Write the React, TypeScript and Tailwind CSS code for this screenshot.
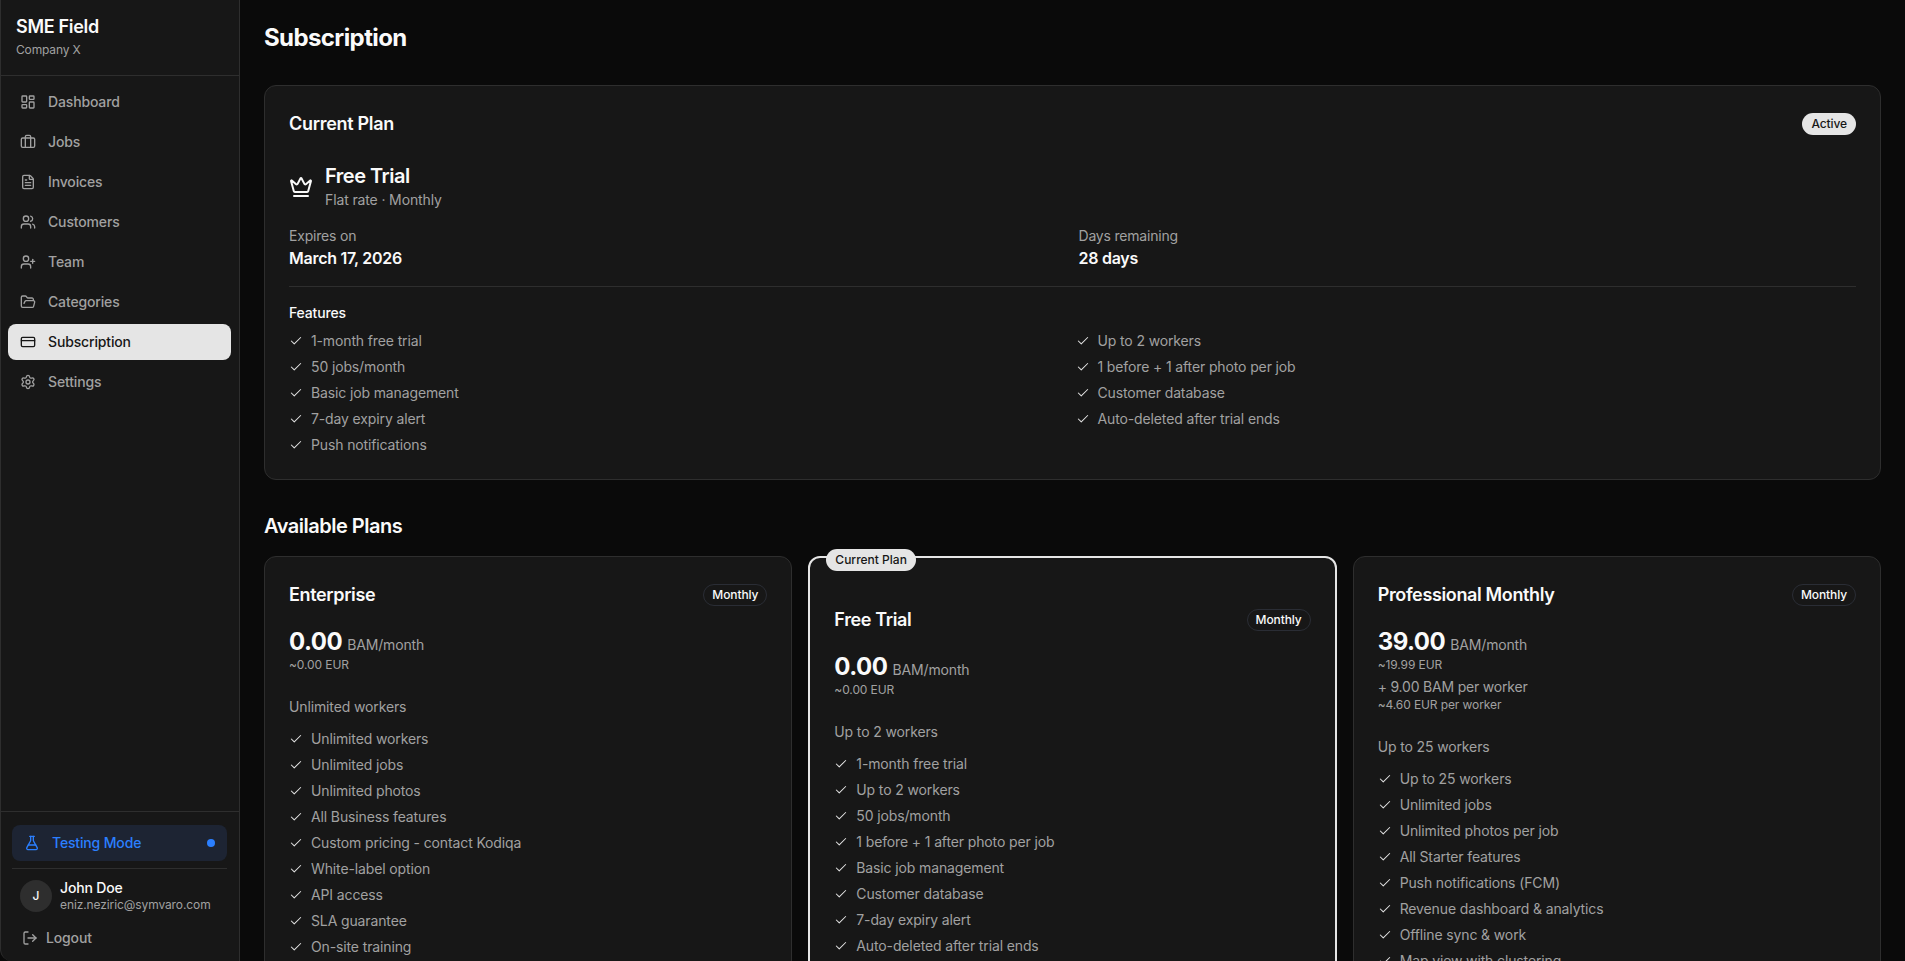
import { Briefcase, Check, CreditCard, Crown, FileText, FlaskConical, FolderOpen, LayoutDashboard, LogOut, Settings, UserPlus, Users } from "lucide-react";

const nav = [
  { label: "Dashboard", Icon: LayoutDashboard },
  { label: "Jobs", Icon: Briefcase },
  { label: "Invoices", Icon: FileText },
  { label: "Customers", Icon: Users },
  { label: "Team", Icon: UserPlus },
  { label: "Categories", Icon: FolderOpen },
  { label: "Subscription", Icon: CreditCard, active: true },
  { label: "Settings", Icon: Settings },
];

const leftFeatures = ["1-month free trial", "50 jobs/month", "Basic job management", "7-day expiry alert", "Push notifications"];
const rightFeatures = ["Up to 2 workers", "1 before + 1 after photo per job", "Customer database", "Auto-deleted after trial ends"];

const plans = [
  {
    name: "Enterprise",
    price: "0.00",
    eur: "~0.00 EUR",
    workers: "Unlimited workers",
    features: ["Unlimited workers", "Unlimited jobs", "Unlimited photos", "All Business features", "Custom pricing - contact Kodiqa", "White-label option", "API access", "SLA guarantee", "On-site training"],
  },
  {
    name: "Free Trial",
    current: true,
    price: "0.00",
    eur: "~0.00 EUR",
    workers: "Up to 2 workers",
    features: ["1-month free trial", "Up to 2 workers", "50 jobs/month", "1 before + 1 after photo per job", "Basic job management", "Customer database", "7-day expiry alert", "Auto-deleted after trial ends"],
  },
  {
    name: "Professional Monthly",
    price: "39.00",
    eur: "~19.99 EUR",
    extra: "+ 9.00 BAM per worker",
    extraEur: "~4.60 EUR per worker",
    workers: "Up to 25 workers",
    features: ["Up to 25 workers", "Unlimited jobs", "Unlimited photos per job", "All Starter features", "Push notifications (FCM)", "Revenue dashboard & analytics", "Offline sync & work", "Map view with clustering"],
  },
];

function Feature({ text }: { text: string }) {
  return (
    <li className="flex items-center gap-2 text-sm leading-5 text-[#a1a1a1]">
      <Check size={14} strokeWidth={1.75} className="shrink-0 text-[#e5e5e5]" />
      <span>{text}</span>
    </li>
  );
}

function Sidebar() {
  return (
    <aside className="flex h-full w-[240px] shrink-0 flex-col rounded-bl-xl border-x border-[#2e2e2e] bg-[#171717]">
      <div className="h-[76px] shrink-0 border-b border-[#2e2e2e] px-[15px] pt-[13px]">
        <div className="text-lg leading-7 font-semibold tracking-[-0.3px] text-[#fafafa]">SME Field</div>
        <div className="mt-px text-xs leading-4 tracking-[-0.15px] text-[#a1a1a1]">Company X</div>
      </div>
      <nav className="flex flex-1 flex-col gap-1 pt-2 pr-2 pl-[7px]">
        {nav.map(({ label, Icon, active }) => (
          <div
            key={label}
            className={`flex h-9 items-center gap-3 rounded-lg px-3 text-sm font-medium tracking-[-0.15px] ${active ? "bg-[#e5e5e5] text-[#171717]" : "text-[#a1a1a1]"}`}
          >
            <Icon size={16} strokeWidth={2} className="shrink-0" />
            <span>{label}</span>
          </div>
        ))}
      </nav>
      <div className="border-t border-[#2e2e2e] pt-[13px] pr-3 pb-[5px] pl-[11px]">
        <div className="flex h-9 items-center gap-3 rounded-lg bg-[#1d2433] px-3 text-sm font-medium tracking-[-0.15px] text-[#2b7fff]">
          <FlaskConical size={16} strokeWidth={2} className="shrink-0" />
          <span className="flex-1">Testing Mode</span>
          <span className="size-2 rounded-full bg-[#2b7fff]" />
        </div>
        <div className="mt-[7px] border-t border-[#2e2e2e] pt-[10px]">
          <div className="flex items-center gap-2 px-2">
            <div className="flex size-8 items-center justify-center rounded-full bg-[#2e2e2e] text-xs font-medium text-[#fafafa]">J</div>
            <div className="min-w-0">
              <div className="text-sm leading-[18px] font-medium tracking-[-0.15px] text-[#fafafa]">John Doe</div>
              <div className="text-xs leading-4 tracking-[-0.1px] text-[#a1a1a1]">eniz.neziric@symvaro.com</div>
            </div>
          </div>
          <div className="mt-[7px] flex h-9 items-center gap-2 px-[10px] text-sm font-medium tracking-[-0.15px] text-[#a1a1a1]">
            <LogOut size={16} strokeWidth={2} className="shrink-0" />
            <span>Logout</span>
          </div>
        </div>
      </div>
    </aside>
  );
}

function CurrentPlan() {
  return (
    <section className="rounded-xl border border-[#2e2e2e] bg-[#171717] p-6">
      <div className="flex items-center justify-between">
        <h2 className="text-lg leading-7 font-semibold tracking-[-0.3px] text-[#fafafa]">Current Plan</h2>
        <span className="rounded-full bg-[#e5e5e5] px-[9px] py-0.5 text-xs leading-[18px] font-medium tracking-[-0.1px] text-[#171717]">Active</span>
      </div>
      <div className="mt-6 flex items-center gap-3">
        <Crown size={24} strokeWidth={2} className="mt-[2px] text-[#fafafa]" />
        <div>
          <div className="text-xl leading-7 font-semibold tracking-tight text-[#fafafa]">Free Trial</div>
          <div className="text-sm leading-5 tracking-[-0.13px] text-[#a1a1a1]">Flat rate · Monthly</div>
        </div>
      </div>
      <div className="mt-4 grid grid-cols-2 gap-3">
        <div>
          <div className="text-sm leading-5 tracking-[-0.2px] text-[#a1a1a1]">Expires on</div>
          <div className="text-base leading-6 font-semibold tracking-[-0.26px] text-[#fafafa]">March 17, 2026</div>
        </div>
        <div>
          <div className="text-sm leading-5 tracking-[-0.2px] text-[#a1a1a1]">Days remaining</div>
          <div className="text-base leading-6 font-semibold tracking-[-0.26px] text-[#fafafa]">28 days</div>
        </div>
      </div>
      <div className="mt-4 border-t border-[#2e2e2e] pt-4">
        <div className="text-sm leading-5 font-medium tracking-[-0.15px] text-[#fafafa]">Features</div>
        <div className="mt-2 grid grid-cols-2 gap-1.5 tracking-[-0.13px]">
          <ul className="flex flex-col gap-1.5">
            {leftFeatures.map((f) => <Feature key={f} text={f} />)}
          </ul>
          <ul className="flex flex-col gap-1.5">
            {rightFeatures.map((f) => <Feature key={f} text={f} />)}
          </ul>
        </div>
      </div>
    </section>
  );
}

function PlanCard({ plan }: { plan: (typeof plans)[number] }) {
  return (
    <article className={`relative rounded-xl bg-[#171717] px-6 pb-6 ${plan.current ? "border-2 border-[#e5e5e5] pt-12" : "border border-[#2e2e2e] pt-6"}`}>
      {plan.current && (
        <span className="absolute top-[-9px] left-4 rounded-full bg-[#e5e5e5] px-[9px] py-0.5 text-xs leading-[18px] font-medium text-[#171717]">Current Plan</span>
      )}
      <div className="flex items-center justify-between">
        <h3 className="text-lg leading-7 font-semibold tracking-[-0.36px] text-[#fafafa]">{plan.name}</h3>
        <span className="rounded-full border border-[#2a2d35] px-2 py-0.5 text-xs leading-4 font-medium tracking-[-0.1px] text-[#fafafa]">Monthly</span>
      </div>
      <div className="mt-[17px] flex items-baseline gap-[5px]">
        <span className="text-2xl leading-[31px] font-bold tracking-[-0.5px] text-[#fafafa]">{plan.price}</span>
        <span className="text-sm leading-5 tracking-[-0.15px] text-[#a1a1a1]">BAM/month</span>
      </div>
      <div className="text-xs leading-4 tracking-[-0.1px] text-[#a1a1a1]">{plan.eur}</div>
      {plan.extra && (
        <div className="mt-1">
          <div className="text-sm leading-5 tracking-[-0.2px] text-[#a1a1a1]">{plan.extra}</div>
          <div className="text-xs leading-4 tracking-[-0.1px] text-[#a1a1a1]">{plan.extraEur}</div>
        </div>
      )}
      <div className="mt-6 text-sm leading-5 tracking-[-0.13px] text-[#a1a1a1]">{plan.workers}</div>
      <ul className="mt-3 flex flex-col gap-1.5 tracking-[-0.13px]">
        {plan.features.map((f) => <Feature key={f} text={f} />)}
      </ul>
    </article>
  );
}

export default function App() {
  return (
    <div className="flex h-screen w-full overflow-hidden bg-[#0a0a0a] font-['Inter',sans-serif]">
      <Sidebar />
      <main className="min-w-0 flex-1 overflow-hidden px-6 pt-[22px]">
        <h1 className="text-2xl leading-8 font-bold tracking-tight text-[#fafafa]">Subscription</h1>
        <div className="mt-[31px]">
          <CurrentPlan />
        </div>
        <h2 className="mt-8 text-xl leading-7 font-semibold tracking-tight text-[#fafafa]">Available Plans</h2>
        <div className="mt-4 grid grid-cols-3 gap-4">
          {plans.map((p) => <PlanCard key={p.name} plan={p} />)}
        </div>
      </main>
    </div>
  );
}
